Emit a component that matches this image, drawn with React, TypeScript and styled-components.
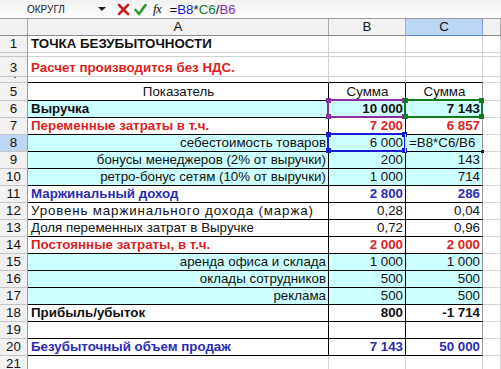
import React from "react";
import styled, { createGlobalStyle, css } from "styled-components";

const GlobalStyle = createGlobalStyle`
  html, body { margin: 0; padding: 0; background: #fff; }
  body {
    font-family: "Liberation Sans", Arial, sans-serif;
    overflow: hidden;
  }
`;

type Tone = "black" | "red" | "blue";
type Align = "left" | "center" | "right";
type SelColor = "purple" | "green" | "blue";

const toneColors: Record<Tone, string> = {
  black: "#111111",
  red: "#dc1f1f",
  blue: "#2b2bb0",
};

const selColors: Record<SelColor, string> = {
  purple: "#8b2fa3",
  green: "#137a1e",
  blue: "#1a1ad0",
};

const CYAN = "#ccffff";
const GRID = "#d2d2d2";
const INK = "#000000";

// Formula bar
const FormulaBar = styled.div`
  height: 19px;
  box-sizing: border-box;
  border-bottom: 1px solid #9c9c9c;
  display: flex;
  align-items: center;
  background: linear-gradient(#f2f2f2, #fdfdfd);
`;

const NameBox = styled.div`
  width: 71px;
  padding-left: 27px;
  font-size: 10px;
  color: #222;
`;

const DropArrow = styled.span`
  width: 0;
  height: 0;
  border-left: 4px solid transparent;
  border-right: 4px solid transparent;
  border-top: 4px solid #222;
`;

const BarIcon = styled.span<{ $gap: number }>`
  display: flex;
  align-items: center;
  margin-left: ${(p) => p.$gap}px;
`;

const Fx = styled.span`
  font-family: "Liberation Serif", serif;
  font-style: italic;
  font-size: 13px;
  margin-left: 6px;
  color: #111;
  letter-spacing: -0.5px;
`;

const FormulaText = styled.div`
  margin-left: 8px;
  font-size: 13.33px;
  color: #111;
`;

const Ref = styled.span<{ $c: SelColor }>`
  color: ${(p) => selColors[p.$c]};
`;

// Sheet grid
const Sheet = styled.div`
  display: grid;
  grid-template-columns: 28px 301px 77px 77px 1fr;
  grid-template-rows: 17px 17px 4px 20px 6px 18px repeat(16, 17px);
  font-size: 13.33px;
`;

const HeadBase = css`
  box-sizing: border-box;
  display: flex;
  justify-content: center;
  align-items: flex-end;
  overflow: hidden;
  line-height: 15px;
  padding-bottom: 1px;
  color: #111;
`;

const ColHead = styled.div<{ $active?: boolean }>`
  ${HeadBase}
  background: ${(p) => (p.$active ? "#bcd6f4" : "#f1f1f1")};
  border-right: 1px solid ${(p) => (p.$active ? "#7ea4d6" : "#a9a9a9")};
  border-bottom: 1px solid ${(p) => (p.$active ? "#5f8fd0" : "#8a8a8a")};
`;

const RowHead = styled.div<{ $active?: boolean }>`
  ${HeadBase}
  background: ${(p) => (p.$active ? "#bcd6f4" : "#f1f1f1")};
  border-right: 1px solid #9a9a9a;
  border-bottom: 1px solid #c4c4c4;
`;

const Cell = styled.div<{
  $bg?: string;
  $align?: Align;
  $tone?: Tone;
  $bold?: boolean;
  $spread?: boolean;
  $right: string;
  $bottom: string;
}>`
  position: relative;
  box-sizing: border-box;
  display: flex;
  align-items: flex-end;
  justify-content: ${(p) =>
    p.$align === "right" ? "flex-end" : p.$align === "center" ? "center" : "flex-start"};
  padding: 0 2px 1px 3px;
  line-height: 15px;
  white-space: nowrap;
  background: ${(p) => p.$bg || "#fff"};
  color: ${(p) => toneColors[p.$tone || "black"]};
  font-weight: ${(p) => (p.$bold ? 700 : 400)};
  letter-spacing: ${(p) => (p.$spread ? "0.85px" : "0")};
  border-right: 1px solid ${(p) => p.$right};
  border-bottom: 1px solid ${(p) => p.$bottom};
`;

const Selection = styled.div<{ $c: SelColor }>`
  position: absolute;
  top: -2px;
  left: -2px;
  right: -1px;
  bottom: -1px;
  border: 2px solid ${(p) => selColors[p.$c]};
  z-index: 2;
  pointer-events: none;
`;

const Handle = styled.span<{ $c: SelColor; $v: "top" | "bottom"; $s: "left" | "right" }>`
  position: absolute;
  width: 5px;
  height: 5px;
  background: ${(p) => selColors[p.$c]};
  ${(p) => p.$v}: -3px;
  ${(p) => p.$s}: -3px;
`;

const EditMark = styled.div`
  position: absolute;
  top: -1px;
  left: -1px;
  bottom: -1px;
  width: 1px;
  background: #e6e66a;
  z-index: 3;
`;

const CornerMark = styled.div`
  position: absolute;
  right: -2px;
  bottom: -2px;
  width: 3px;
  height: 3px;
  background: #111;
  z-index: 3;
`;

type CellDef = {
  text?: string;
  align?: Align;
  tone?: Tone;
  bold?: boolean;
  spread?: boolean;
  sel?: SelColor;
  edit?: boolean;
};

type RowDef = {
  n: number;
  table?: boolean;
  topEdge?: boolean;
  bg?: string;
  a?: CellDef;
  b?: CellDef;
  c?: CellDef;
};

const num = (text: string, tone?: Tone, bold?: boolean, sel?: SelColor): CellDef => ({
  text,
  align: "right",
  tone,
  bold,
  sel,
});

const rows: RowDef[] = [
  { n: 1, a: { text: "ТОЧКА БЕЗУБЫТОЧНОСТИ", bold: true } },
  { n: 2 },
  { n: 3, a: { text: "Расчет производится без НДС.", bold: true, tone: "red" } },
  { n: 4, topEdge: true },
  {
    n: 5, table: true,
    a: { text: "Показатель", align: "center" },
    b: { text: "Сумма", align: "center" },
    c: { text: "Сумма", align: "center" },
  },
  {
    n: 6, table: true, bg: CYAN,
    a: { text: "Выручка", bold: true },
    b: num("10 000", "black", true, "purple"),
    c: num("7 143", "black", true, "green"),
  },
  {
    n: 7, table: true,
    a: { text: "Переменные затраты в т.ч.", bold: true, tone: "red" },
    b: num("7 200", "red", true),
    c: num("6 857", "red", true),
  },
  {
    n: 8, table: true, bg: CYAN,
    a: { text: "себестоимость товаров", align: "right" },
    b: num("6 000", "black", false, "blue"),
    c: { text: "=B8*C6/B6", align: "left", edit: true },
  },
  {
    n: 9, table: true, bg: CYAN,
    a: { text: "бонусы менеджеров (2% от выручки)", align: "right" },
    b: num("200"),
    c: num("143"),
  },
  {
    n: 10, table: true, bg: CYAN,
    a: { text: "ретро-бонус сетям (10% от выручки)", align: "right" },
    b: num("1 000"),
    c: num("714"),
  },
  {
    n: 11, table: true,
    a: { text: "Маржинальный доход", bold: true, tone: "blue" },
    b: num("2 800", "blue", true),
    c: num("286", "blue", true),
  },
  {
    n: 12, table: true,
    a: { text: "Уровень маржинального дохода (маржа)", spread: true },
    b: num("0,28"),
    c: num("0,04"),
  },
  {
    n: 13, table: true,
    a: { text: "Доля переменных затрат в Выручке" },
    b: num("0,72"),
    c: num("0,96"),
  },
  {
    n: 14, table: true,
    a: { text: "Постоянные затраты, в т.ч.", bold: true, tone: "red" },
    b: num("2 000", "red", true),
    c: num("2 000", "red", true),
  },
  {
    n: 15, table: true, bg: CYAN,
    a: { text: "аренда офиса и склада", align: "right" },
    b: num("1 000"),
    c: num("1 000"),
  },
  {
    n: 16, table: true, bg: CYAN,
    a: { text: "оклады сотрудников", align: "right" },
    b: num("500"),
    c: num("500"),
  },
  {
    n: 17, table: true, bg: CYAN,
    a: { text: "реклама", align: "right" },
    b: num("500"),
    c: num("500"),
  },
  {
    n: 18, table: true,
    a: { text: "Прибыль/убыток", bold: true },
    b: num("800", "black", true),
    c: num("-1 714", "black", true),
  },
  { n: 19, table: true },
  {
    n: 20, table: true,
    a: { text: "Безубыточный объем продаж", bold: true, tone: "blue" },
    b: num("7 143", "blue", true),
    c: num("50 000", "blue", true),
  },
  { n: 21 },
];

const SheetCell: React.FC<{ def?: CellDef; row: RowDef; right: string }> = ({ def, row, right }) => {
  const d = def || {};
  const bottom = row.table || row.topEdge ? INK : GRID;
  return (
    <Cell
      $bg={row.bg}
      $align={d.align}
      $tone={d.tone}
      $bold={d.bold}
      $spread={d.spread}
      $right={right}
      $bottom={bottom}
    >
      {d.text}
      {d.sel && (
        <Selection $c={d.sel}>
          <Handle $c={d.sel} $v="top" $s="left" />
          <Handle $c={d.sel} $v="top" $s="right" />
          <Handle $c={d.sel} $v="bottom" $s="left" />
          <Handle $c={d.sel} $v="bottom" $s="right" />
        </Selection>
      )}
      {d.edit && (
        <>
          <EditMark />
          <CornerMark />
        </>
      )}
    </Cell>
  );
};

const CrossIcon = () => (
  <svg width="13" height="13" viewBox="0 0 13 13">
    <path d="M2 2 L11 11 M11 2 L2 11" stroke="#c8201e" strokeWidth="2.6" strokeLinecap="round" />
  </svg>
);

const CheckIcon = () => (
  <svg width="13" height="13" viewBox="0 0 13 13">
    <path d="M1.5 7 L5 11 L11.5 2" fill="none" stroke="#2c9a2c" strokeWidth="2.6" strokeLinecap="round" strokeLinejoin="round" />
  </svg>
);

const App: React.FC = () => {
  return (
    <>
      <GlobalStyle />
      <FormulaBar>
        <NameBox>ОКРУГЛ</NameBox>
        <DropArrow />
        <BarIcon $gap={11}>
          <CrossIcon />
        </BarIcon>
        <BarIcon $gap={4}>
          <CheckIcon />
        </BarIcon>
        <Fx>fx</Fx>
        <FormulaText>
          =<Ref $c="blue">B8</Ref>*<Ref $c="green">C6</Ref>/<Ref $c="purple">B6</Ref>
        </FormulaText>
      </FormulaBar>
      <Sheet>
        <ColHead />
        <ColHead>A</ColHead>
        <ColHead>B</ColHead>
        <ColHead $active>C</ColHead>
        <ColHead />
        {rows.map((row) => {
          const inner = row.table ? INK : GRID;
          return (
            <React.Fragment key={row.n}>
              <RowHead $active={row.n === 8}>{row.n}</RowHead>
              <SheetCell def={row.a} row={row} right={inner} />
              <SheetCell def={row.b} row={row} right={inner} />
              <SheetCell def={row.c} row={row} right={row.table ? "#9a9a9a" : GRID} />
              <Cell $right={GRID} $bottom={GRID} />
            </React.Fragment>
          );
        })}
      </Sheet>
    </>
  );
};

export default App;
